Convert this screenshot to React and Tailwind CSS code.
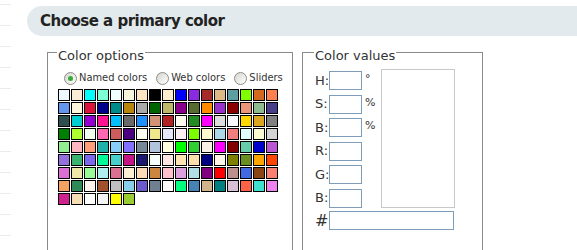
import React from "react";

const NAMED = [
  "#F0F8FF", "#FAEBD7", "#00FFFF", "#7FFFD4", "#F0FFFF", "#F5F5DC", "#FFE4C4", "#000000", "#FFEBCD", "#0000FF", "#8A2BE2", "#A52A2A", "#DEB887", "#5F9EA0", "#7FFF00", "#D2691E", "#FF7F50",
  "#6495ED", "#FFF8DC", "#DC143C", "#00008B", "#008B8B", "#B8860B", "#A9A9A9", "#006400", "#BDB76B", "#8B008B", "#556B2F", "#FF8C00", "#9932CC", "#8B0000", "#E9967A", "#8FBC8F", "#483D8B",
  "#2F4F4F", "#00CED1", "#9400D3", "#FF1493", "#00BFFF", "#696969", "#1E90FF", "#D19275", "#B22222", "#FFFAF0", "#228B22", "#FF00FF", "#DCDCDC", "#F8F8FF", "#FFD700", "#DAA520", "#808080",
  "#008000", "#ADFF2F", "#F0FFF0", "#FF69B4", "#CD5C5C", "#4B0082", "#FFFFF0", "#F0E68C", "#E6E6FA", "#FFF0F5", "#7CFC00", "#FFFACD", "#ADD8E6", "#F08080", "#E0FFFF", "#FAFAD2", "#D3D3D3",
  "#90EE90", "#FFB6C1", "#FFA07A", "#20B2AA", "#87CEFA", "#8470FF", "#778899", "#B0C4DE", "#FFFFE0", "#00FF00", "#32CD32", "#FAF0E6", "#FF00FF", "#800000", "#66CDAA", "#0000CD", "#BA55D3",
  "#9370DB", "#3CB371", "#7B68EE", "#00FA9A", "#48D1CC", "#C71585", "#191970", "#F5FFFA", "#FFE4E1", "#FFE4B5", "#FFDEAD", "#000080", "#FDF5E6", "#808000", "#6B8E23", "#FFA500", "#FF4500",
  "#DA70D6", "#EEE8AA", "#98FB98", "#AFEEEE", "#DB7093", "#FFEFD5", "#FFDAB9", "#CD853F", "#FFC0CB", "#DDA0DD", "#B0E0E6", "#800080", "#FF0000", "#BC8F8F", "#4169E1", "#8B4513", "#FA8072",
  "#F4A460", "#2E8B57", "#FFF5EE", "#A0522D", "#C0C0C0", "#87CEEB", "#6A5ACD", "#708090", "#FFFAFA", "#00FF7F", "#4682B4", "#D2B48C", "#008080", "#D8BFD8", "#FF6347", "#40E0D0", "#EE82EE",
  "#D02090", "#F5DEB3", "#FFFFFF", "#F5F5F5", "#FFFF00", "#9ACD32",
];

function Radio({ checked, label }) {
  return (
    <label className="flex shrink-0 items-center gap-[2px] whitespace-nowrap">
      <span className="flex h-[13px] w-[13px] shrink-0 items-center justify-center rounded-full border border-[#8c8c8c] bg-gradient-to-br from-[#d6d6ce] to-white">
        {checked && <span className="h-[5px] w-[5px] rounded-full bg-[#3aa93a]" />}
      </span>
      <span>{label}</span>
    </label>
  );
}

function Field({ label, unit, wide }) {
  return (
    <div className="flex h-[19px] items-center">
      <span className="w-[14px]">{label}</span>
      <span className={`h-[19px] border border-[#7f9db9] bg-white ${wide ? "w-[125px]" : "w-[33px]"}`} />
      {!wide && (
        <span className="ml-[3px] w-[14px] self-start text-[11px] leading-[16px]">{unit}</span>
      )}
    </div>
  );
}

export default function App() {
  return (
    <div className="flex h-[250px] w-[577px] overflow-hidden bg-white font-['DejaVu_Sans',sans-serif] text-[#333]">
      {/* notebook margin */}
      <div className="w-[27px] shrink-0">
        <div className="w-[11px]">
          <div className="h-[5px] border-b border-[#ebebeb]" />
          {Array.from({ length: 12 }).map((_, i) => (
            <div key={i} className="h-[21px] border-b border-[#ebebeb]" />
          ))}
        </div>
      </div>

      <div className="flex-1">
        <div className="mt-[6px] flex h-[30px] items-center rounded-l-[15px] bg-[#e3eaed] pl-[13px]">
          <h1 className="text-[15px] font-bold tracking-[-0.5px] text-[#222]">
            Choose a primary color
          </h1>
        </div>

        <div className="ml-[20px] mt-[9px] flex gap-[9px]">
          <fieldset className="h-[230px] w-[246px] min-w-0 shrink-0 border border-[#8a8a8a] px-[10px]">
            <legend className="ml-[-1px] px-[1px] text-[13px] leading-[15px]">
              <span className="relative top-[3px]">Color options</span>
            </legend>
            <div className="mt-[11px] flex font-['DejaVu_Sans_Condensed',sans-serif] text-[11px] leading-[14px]">
              <div className="ml-[6px]">
                <Radio checked label="Named colors" />
              </div>
              <div className="ml-[9px]">
                <Radio label="Web colors" />
              </div>
              <div className="ml-[9px]">
                <Radio label="Sliders" />
              </div>
            </div>
            <div className="mt-[4px] grid grid-cols-[repeat(17,12px)] gap-[1px]">
              {NAMED.map((c, i) => (
                <div key={i} className="h-[12px] w-[12px] border border-black" style={{ background: c }} />
              ))}
            </div>
          </fieldset>

          <fieldset className="h-[230px] w-[181px] min-w-0 shrink-0 border border-[#8a8a8a] pl-[12px]">
            <legend className="ml-[-1px] px-[1px] text-[13px] leading-[15px]">
              <span className="relative top-[3px]">Color values</span>
            </legend>
            <div className="mt-[11px] flex text-[13px]">
              <div className="flex flex-col gap-[4.5px]">
                <Field label="H:" unit="°" />
                <Field label="S:" unit="%" />
                <Field label="B:" unit="%" />
                <Field label="R:" />
                <Field label="G:" />
                <Field label="B:" />
              </div>
              <div className="ml-[2px] mt-[-2px] h-[139px] w-[74px] border border-[#c8c8c8]" />
            </div>
            <div className="mt-[3px]">
              <Field label="#" wide />
            </div>
          </fieldset>
        </div>
      </div>
    </div>
  );
}
